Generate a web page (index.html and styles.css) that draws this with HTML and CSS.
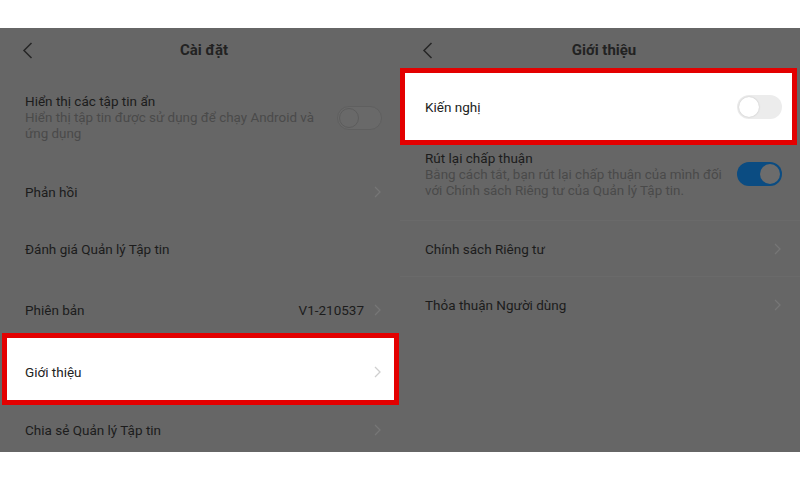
FILE: index.html
```html
<!DOCTYPE html>
<html lang="vi">
<head>
    <meta charset="UTF-8" />
    <title>Cài đặt - Giới thiệu</title>
    <link rel="stylesheet" href="styles.css">
</head>
<body>

<div class="shot">
    <section class="panel">
        <header class="bar">
            <svg class="back" width="11" height="17" viewBox="0 0 11 17"><path d="M9.5 1 L2 8.5 L9.5 16" fill="none" stroke="#262626" stroke-width="1.5"/></svg>
            <h1>Cài đặt</h1>
        </header>
        <div class="row multi">
            <div class="text">
                <div class="title">Hiển thị các tập tin ẩn</div>
                <div class="sub">Hiển thị tập tin được sử dụng để chạy Android và ứng dụng</div>
            </div>
            <span class="sw dim"></span>
        </div>
        <div class="row h58">
            <span>Phản hồi</span>
            <svg class="chev" width="7" height="12" viewBox="0 0 7 12"><path d="M1 1 L6 6 L1 11" fill="none" stroke-width="1.3"/></svg>
        </div>
        <div class="row h56">
            <span>Đánh giá Quản lý Tập tin</span>
        </div>
        <div class="row h56 low">
            <span>Phiên bản</span>
            <span class="end">
                <span class="val">V1-210537</span>
                <svg class="chev" width="7" height="12" viewBox="0 0 7 12"><path d="M1 1 L6 6 L1 11" fill="none" stroke-width="1.3"/></svg>
            </span>
        </div>
        <div class="row hl hl-left">
            <span>Giới thiệu</span>
            <svg class="chev" width="7" height="12" viewBox="0 0 7 12"><path d="M1 1 L6 6 L1 11" fill="none" stroke-width="1.3"/></svg>
        </div>
        <div class="row last">
            <span>Chia sẻ Quản lý Tập tin</span>
            <svg class="chev" width="7" height="12" viewBox="0 0 7 12"><path d="M1 1 L6 6 L1 11" fill="none" stroke-width="1.3"/></svg>
        </div>
    </section>

    <section class="panel">
        <header class="bar">
            <svg class="back" width="11" height="17" viewBox="0 0 11 17"><path d="M9.5 1 L2 8.5 L9.5 16" fill="none" stroke="#262626" stroke-width="1.5"/></svg>
            <h1>Giới thiệu</h1>
        </header>
        <div class="row hl hl-right">
            <span>Kiến nghị</span>
            <span class="sw off"></span>
        </div>
        <div class="row multi consent">
            <div class="text">
                <div class="title">Rút lại chấp thuận</div>
                <div class="sub">Bằng cách tắt, bạn rút lại chấp thuận của mình đối với Chính sách Riêng tư của Quản lý Tập tin.</div>
            </div>
            <span class="sw on"></span>
        </div>
        <div class="row h56 line">
            <span>Chính sách Riêng tư</span>
            <svg class="chev" width="7" height="12" viewBox="0 0 7 12"><path d="M1 1 L6 6 L1 11" fill="none" stroke-width="1.3"/></svg>
        </div>
        <div class="row h56 line">
            <span>Thỏa thuận Người dùng</span>
            <svg class="chev" width="7" height="12" viewBox="0 0 7 12"><path d="M1 1 L6 6 L1 11" fill="none" stroke-width="1.3"/></svg>
        </div>
    </section>
</div>

</body>
</html>
```
FILE: styles.css
```css
body {
    margin: 0;
    background: #fff;
    font-family: Roboto, "Noto Sans", sans-serif;
}
.shot {
    margin-top: 28px;
    height: 424px;
    display: flex;
    background: #666;
    color: #1c1c1c;
    overflow: hidden;
}
.panel {
    width: 400px;
    flex: none;
}
.bar {
    height: 40px;
    box-sizing: border-box;
    padding: 4px 0 0 8px;
    display: grid;
    grid-template-columns: 1fr auto 1fr;
    align-items: center;
}
.back {
    margin-left: 14px;
}
.bar h1 {
    margin: 0;
    font-size: 15px;
    font-weight: bold;
    line-height: 36px;
    color: #222;
}
.row {
    box-sizing: border-box;
    display: flex;
    align-items: center;
    justify-content: space-between;
    padding: 0 19px 0 25px;
    font-size: 13.5px;
}
.h58 {
    height: 58px;
}
.h56 {
    height: 56px;
}
.low {
    padding-top: 10px;
}
.last {
    height: 47px;
    padding-top: 3px;
}
.line {
    border-top: 1px solid #6a6a6a;
}
.multi {
    height: 95px;
    align-items: flex-start;
    padding-top: 24px;
    padding-right: 18px;
}
.multi .sw {
    margin-top: 14px;
}
.consent {
    height: 75px;
    padding-top: 4px;
}
.consent .sw {
    margin-top: 13px;
}
.text {
    width: 300px;
}
.title {
    line-height: 18px;
}
.sub {
    font-size: 13.4px;
    line-height: 16px;
    color: #4a4a4a;
}
.chev {
    stroke: #767676;
}
.end {
    display: flex;
    align-items: center;
    gap: 10px;
}
.val {
    color: #1c1c1c;
}
.hl {
    background: #fff;
    border: 5px solid #e30000;
    color: #222;
}
.hl .chev {
    stroke: #cfcfcf;
}
.hl-left {
    height: 72px;
    margin: 0 1px 0 2px;
    padding: 5px 13px 0 18px;
}
.hl-right {
    height: 77px;
    margin: 0 3px 0 0;
    padding: 0 10px 0 20px;
}
.sw {
    position: relative;
    width: 45px;
    height: 24px;
    border-radius: 12px;
    box-sizing: border-box;
    flex: none;
}
.sw::after {
    content: "";
    position: absolute;
    top: 2px;
    width: 20px;
    height: 20px;
    border-radius: 50%;
    box-sizing: border-box;
}
.sw.dim {
    background: #696969;
    border: 1px solid #5f5f5f;
}
.sw.dim::after {
    top: 1px;
    left: 1px;
    border: 1px solid #5c5c5c;
}
.sw.off {
    background: #ececec;
}
.sw.off::after {
    left: 2px;
    background: #fff;
    box-shadow: 0 0 2px rgba(0, 0, 0, 0.2);
}
.sw.on {
    background: #0b4c82;
}
.sw.on::after {
    right: 2px;
    background: #6c6c6c;
}
```
